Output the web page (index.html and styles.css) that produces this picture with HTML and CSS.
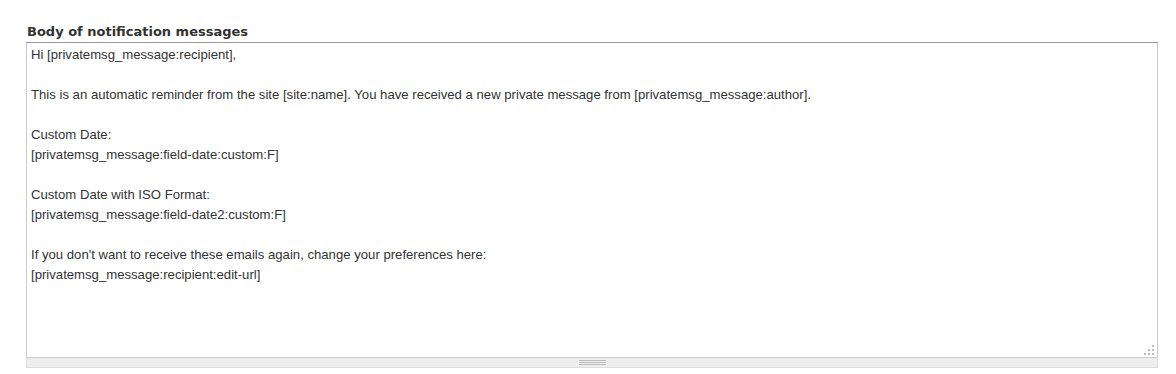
FILE: index.html
```html
<!DOCTYPE html>
<html>
<head>
<meta charset="utf-8">
<link rel="stylesheet" href="styles.css">
</head>
<body>
<div class="form-item">
  <label class="label">Body of notification messages</label>
  <div class="resizable">
    <div class="textarea">Hi [privatemsg_message:recipient],

This is an automatic reminder from the site [site:name]. You have received a new private message from [privatemsg_message:author].

Custom Date:
[privatemsg_message:field-date:custom:F]

Custom Date with ISO Format:
[privatemsg_message:field-date2:custom:F]

If you don't want to receive these emails again, change your preferences here:
[privatemsg_message:recipient:edit-url]<span class="resize-handle"><svg width="10" height="10" viewBox="0 0 10 10"><g fill="#bbb"><rect x="8" y="0" width="2" height="2"/><rect x="4" y="4" width="2" height="2"/><rect x="8" y="4" width="2" height="2"/><rect x="0" y="8" width="2" height="2"/><rect x="4" y="8" width="2" height="2"/><rect x="8" y="8" width="2" height="2"/></g></svg></span></div>
    <div class="grippie"><span class="grip-lines"></span></div>
  </div>
</div>
</body>
</html>
```
FILE: styles.css
```css
html, body {
  margin: 0;
  padding: 0;
  background: #fff;
}
.form-item {
  padding: 24px 18px 0 26px;
}
.label {
  display: block;
  font-family: "DejaVu Sans", Verdana, sans-serif;
  font-weight: bold;
  font-size: 13px;
  line-height: 16px;
  color: #333;
  margin: 0 0 2px 1px;
}
.resizable {
  display: flex;
  flex-direction: column;
}
.textarea {
  position: relative;
  box-sizing: border-box;
  height: 316px;
  border: 1px solid #ccc;
  border-top-color: #999;
  padding: 2px 4px;
  font-family: "Liberation Sans", Arial, sans-serif;
  font-size: 13.15px;
  line-height: 20px;
  color: #333;
  white-space: pre-wrap;
  background: #fff;
}
.resize-handle {
  position: absolute;
  right: 3px;
  bottom: 2px;
  width: 10px;
  height: 10px;
  display: block;
  line-height: 0;
}
.grippie {
  box-sizing: border-box;
  height: 10px;
  background: #eee;
  border: 1px solid #ddd;
  border-top-width: 0;
  display: flex;
  justify-content: center;
  align-items: flex-start;
}
.grip-lines {
  display: block;
  width: 27px;
  height: 5px;
  margin-top: 2px;
  background: repeating-linear-gradient(to bottom, #bbb 0, #bbb 1px, transparent 1px, transparent 2px);
}
```
